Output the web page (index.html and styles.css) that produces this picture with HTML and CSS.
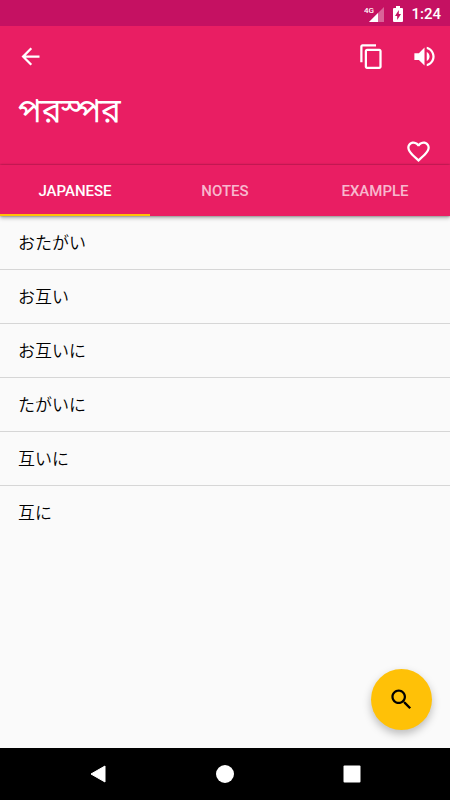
FILE: index.html
```html
<!DOCTYPE html>
<html lang="bn">
<head>
    <meta charset="UTF-8">
    <meta name="viewport" content="width=device-width, initial-scale=1.0">
    <title>পরস্পর</title>
    <link rel="stylesheet" href="styles.css">
</head>
<body>

    <div class="status-bar">
        <svg class="signal" viewBox="0 0 20 18" width="20" height="18" aria-hidden="true">
            <path d="M20 2v15H5z" fill="#fff" fill-opacity="0.35"/>
            <path d="M14 8v9H5z" fill="#fff"/>
            <text class="network" x="0" y="8">4G</text>
        </svg>
        <svg class="battery" viewBox="0 0 10 16" width="10" height="16" aria-hidden="true">
            <path d="M3 0h4v2h2a1 1 0 0 1 1 1v12a1 1 0 0 1-1 1H1a1 1 0 0 1-1-1V3a1 1 0 0 1 1-1h2z" fill="#fff"/>
            <path d="M5.8 4v4H8l-3.800 6V10H2z" fill="#c51162"/>
        </svg>
        <span class="time">1:24</span>
    </div>

    <header class="header">
        <div class="toolbar">
            <a class="icon-btn" href="#" aria-label="Back">
                <svg viewBox="0 0 24 24"><path d="M20 11H7.830l5.590-5.590L12 4l-8 8 8 8 1.410-1.410L7.830 13H20v-2z"/></svg>
            </a>
            <div class="actions">
                <button class="icon-btn" type="button" aria-label="Copy">
                    <svg viewBox="0 0 24 24"><path d="M16 1H4c-1.100 0-2 .9-2 2v14h2V3h12V1zm3 4H8c-1.100 0-2 .9-2 2v14c0 1.100.9 2 2 2h11c1.100 0 2-.9 2-2V7c0-1.100-.9-2-2-2zm0 16H8V7h11v14z"/></svg>
                </button>
                <button class="icon-btn" type="button" aria-label="Listen">
                    <svg viewBox="0 0 24 24"><path d="M3 9v6h4l5 5V4L7 9H3zm13.500 3c0-1.770-1.020-3.290-2.500-4.030v8.050c1.480-.73 2.500-2.250 2.500-4.020zM14 3.230v2.060c2.890.86 5 3.540 5 6.710s-2.110 5.850-5 6.710v2.060c4.010-.91 7-4.490 7-8.770s-2.990-7.860-7-8.770z"/></svg>
                </button>
            </div>
        </div>
        <h1 class="word">পরস্পর</h1>
        <div class="favorite">
            <button class="icon-btn" type="button" aria-label="Favorite">
                <svg viewBox="0 0 24 24"><path d="M16.500 3c-1.740 0-3.410.81-4.500 2.090C10.910 3.810 9.240 3 7.500 3 4.420 3 2 5.420 2 8.500c0 3.780 3.400 6.860 8.550 11.540L12 21.350l1.450-1.320C18.600 15.360 22 12.280 22 8.500 22 5.420 19.580 3 16.500 3zm-4.400 15.550l-.1.100-.1-.1C7.140 14.240 4 11.390 4 8.500 4 6.500 5.500 5 7.500 5c1.540 0 3.040.99 3.570 2.360h1.870C13.460 5.990 14.960 5 16.500 5c2 0 3.500 1.500 3.500 3.500 0 2.890-3.140 5.740-7.900 10.050z"/></svg>
            </button>
        </div>
    </header>

    <nav class="tabs">
        <button class="tab active" type="button">JAPANESE</button>
        <button class="tab" type="button">NOTES</button>
        <button class="tab" type="button">EXAMPLE</button>
    </nav>

    <main class="content">
        <ul class="meanings" lang="ja">
            <li>おたがい</li>
            <li>お互い</li>
            <li>お互いに</li>
            <li>たがいに</li>
            <li>互いに</li>
            <li>互に</li>
        </ul>
        <button class="fab" type="button" aria-label="Search">
            <svg viewBox="0 0 24 24"><path d="M15.500 14h-.79l-.28-.27C15.410 12.590 16 11.110 16 9.500 16 5.910 13.090 3 9.500 3S3 5.910 3 9.500 5.910 16 9.500 16c1.610 0 3.090-.59 4.230-1.570l.27.28v.79l5 4.990L20.490 19l-4.990-5zm-6 0C7.010 14 5 11.990 5 9.500S7.010 5 9.500 5 14 7.010 14 9.500 11.990 14 9.500 14z"/></svg>
        </button>
    </main>

    <footer class="nav-bar">
        <button type="button" aria-label="Back">
            <svg viewBox="0 0 18 18"><path d="M16 1v16L2 9z" stroke="#fff" stroke-linejoin="round"/></svg>
        </button>
        <button type="button" aria-label="Home">
            <svg viewBox="0 0 18 18"><circle cx="9" cy="9" r="9"/></svg>
        </button>
        <button type="button" aria-label="Recent apps">
            <svg viewBox="0 0 18 18"><rect x="0.500" y="0.500" width="17" height="17" rx="1"/></svg>
        </button>
    </footer>

</body>
</html>
```

FILE: styles.css
```css
* {
    box-sizing: border-box;
}
body {
    display: flex;
    flex-direction: column;
    min-height: 100vh;
    margin: 0;
    font-family: Roboto, "Noto Sans", "Noto Sans CJK JP", sans-serif;
    background: #fafafa;
}
button {
    padding: 0;
    border: none;
    background: none;
    font-family: inherit;
    cursor: pointer;
}
svg {
    display: block;
}
.status-bar {
    display: flex;
    align-items: center;
    justify-content: flex-end;
    height: 26px;
    padding: 1px 9px 0;
    background: #c51162;
    color: #fff;
}
.network {
    font-size: 8px;
    font-weight: 500;
    fill: #fff;
}
.battery {
    margin: 0 8px 0 9px;
}
.time {
    font-size: 15px;
    font-weight: 500;
    line-height: 26px;
}
.header {
    padding: 17px 18px 0 17px;
    background: #e91e63;
    color: #fff;
}
.toolbar {
    display: flex;
    justify-content: space-between;
    margin-right: -6px;
}
.actions {
    display: flex;
    gap: 26px;
}
.icon-btn {
    display: block;
    width: 27px;
    height: 27px;
    color: #fff;
}
.icon-btn svg {
    width: 27px;
    height: 27px;
    fill: currentColor;
}
.word {
    margin: 20px 0 0;
    padding-left: 1px;
    font-family: "Noto Sans Bengali", "Noto Sans", sans-serif;
    font-size: 33px;
    font-weight: 400;
    line-height: 48px;
}
.favorite {
    display: flex;
    justify-content: flex-end;
}
.tabs {
    display: flex;
    position: relative;
    height: 51px;
    background: #e91e63;
    box-shadow: 0 0 2px rgba(0, 0, 0, 0.4), 0 2px 4px rgba(0, 0, 0, 0.3);
}
.tab {
    flex: 1;
    border-top: 2px solid transparent;
    border-bottom: 2px solid transparent;
    color: rgba(255, 255, 255, 0.7);
    font-size: 15px;
    font-weight: 500;
}
.tab.active {
    border-bottom-color: #ffc107;
    color: #fff;
}
.content {
    flex: 1;
}
.meanings {
    margin: 0;
    padding: 0;
    list-style: none;
    font-family: "Noto Sans CJK JP", sans-serif;
    font-size: 17px;
    font-weight: 350;
    line-height: 51px;
    color: #000;
}
.meanings li {
    padding: 0 18px 2px;
    border-bottom: 1px solid #d6d6d6;
}
.meanings li:last-child {
    border-bottom: none;
}
.fab {
    display: flex;
    align-items: center;
    justify-content: center;
    position: fixed;
    right: 18px;
    bottom: 70px;
    width: 61px;
    height: 61px;
    border-radius: 50%;
    background: #ffc107;
    box-shadow: 0 4px 8px rgba(0, 0, 0, 0.25);
}
.fab svg {
    width: 27px;
    height: 27px;
}
.nav-bar {
    display: flex;
    justify-content: center;
    gap: 109px;
    height: 52px;
    background: #000;
}
.nav-bar svg {
    width: 18px;
    height: 18px;
    fill: #fff;
}
```
